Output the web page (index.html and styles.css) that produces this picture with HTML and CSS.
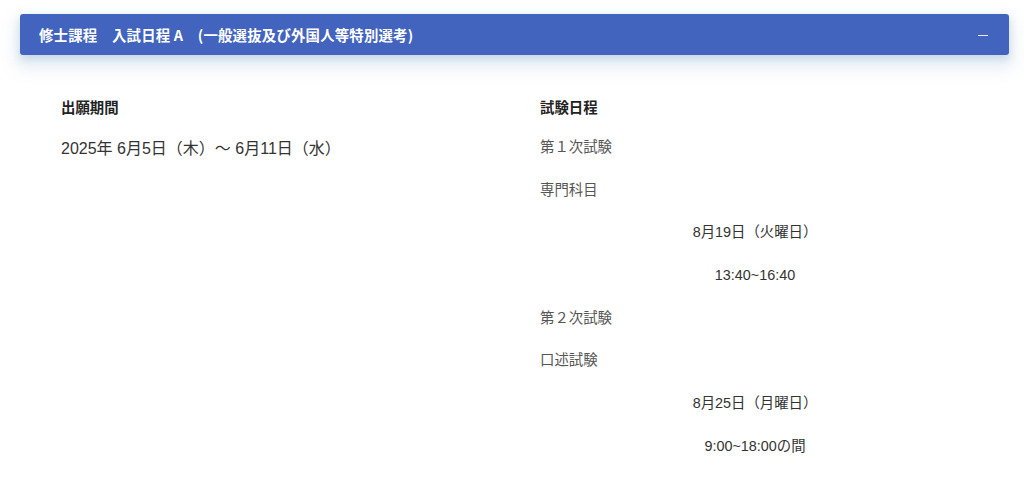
FILE: index.html
```html
<!DOCTYPE html>
<html lang="ja">
<head>
<meta charset="utf-8">
<link rel="stylesheet" href="styles.css">
</head>
<body>
<div class="accordion">
  <div class="acc-head">
    <span class="acc-title">修士課程　入試日程 A　(一般選抜及び外国人等特別選考)</span>
    <span class="acc-toggle"></span>
  </div>
  <div class="acc-body">
    <div class="col">
      <h3 class="col-head">出願期間</h3>
      <p class="period">2025年 6月5日（木）～ 6月11日（水）</p>
    </div>
    <div class="col">
      <h3 class="col-head">試験日程</h3>
      <p class="stage first">第１次試験</p>
      <p class="stage">専門科目</p>
      <p class="when">8月19日（火曜日）</p>
      <p class="when time">13:40~16:40</p>
      <p class="stage">第２次試験</p>
      <p class="stage">口述試験</p>
      <p class="when">8月25日（月曜日）</p>
      <p class="when time">9:00~18:00の間</p>
    </div>
  </div>
</div>
</body>
</html>
```

FILE: styles.css
```css
html, body {
  margin: 0;
  padding: 0;
  background: #ffffff;
}
body {
  font-family: "Liberation Sans", "Noto Sans CJK JP", sans-serif;
  color: #333333;
}
.accordion {
  margin: 14px 15px 0 20px;
}
.acc-head {
  height: 41px;
  background: #4264be;
  border-radius: 3px;
  display: flex;
  align-items: center;
  justify-content: space-between;
  padding: 0 21px 0 19px;
  box-shadow: 0 4px 8px rgba(40, 110, 170, 0.2), 0 9px 16px 6px rgba(60, 120, 170, 0.1);
}
.acc-title {
  color: #ffffff;
  font-size: 14.4px;
  font-weight: bold;
  font-family: "Noto Sans CJK JP", "Liberation Sans", sans-serif;
  letter-spacing: 0.2px;
}
.acc-toggle {
  width: 10px;
  height: 1px;
  background: #e6ebf7;
  margin-top: 1px;
}
.acc-body {
  display: grid;
  grid-template-columns: 479px 1fr;
  padding: 0 0 0 41px;
}
.col-head {
  margin: 0;
  padding-top: 43px;
  font-size: 14.4px;
  line-height: 20px;
  font-weight: bold;
  color: #222222;
}
.period {
  margin: 21px 0 0;
  font-size: 16px;
  line-height: 20px;
  color: #333333;
}
.stage, .when {
  margin: 22.7px 0 0;
  font-size: 14.4px;
  line-height: 20px;
}
.stage.first {
  margin-top: 19px;
}
.stage {
  color: #555555;
}
.when {
  color: #333333;
  width: 430px;
  text-align: center;
}
```
